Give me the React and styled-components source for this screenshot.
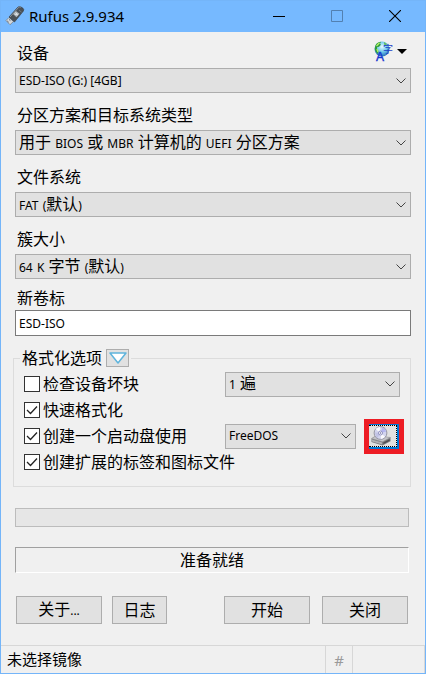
import React, { useId, useState } from "react";
import styled, { createGlobalStyle, css } from "styled-components";

const UI = `"Noto Sans", "Noto Sans CJK SC", sans-serif`;

const GlobalStyle = createGlobalStyle`
  * { box-sizing: border-box; }
  body {
    margin: 0;
    background: #f0f0f0;
    color: #000;
    font: 16px/22px ${UI};
  }
  button, select, input { font: inherit; color: inherit; margin: 0; }
`;

const Window = styled.div`
  display: flex;
  flex-direction: column;
  min-height: 100vh;
  border: 1px solid #74b5f9;
  background: #f0f0f0;
`;

const TitleBar = styled.header`
  display: flex;
  align-items: center;
  height: 31px;
  padding: 0 1px 2px 4px;
  background: #76b9ff;
`;

const Title = styled.h1`
  flex: 1;
  margin: 0 0 0 4px;
  font-size: 15px;
  font-weight: 400;
  line-height: 20px;
`;

const CaptionButton = styled.button`
  display: flex;
  align-items: center;
  justify-content: center;
  width: 58px;
  height: 29px;
  padding: 0;
  border: 0;
  background: transparent;
  &:disabled { opacity: 0.3; }
`;

const Content = styled.main`
  display: flex;
  flex: 1;
  flex-direction: column;
  padding: 10px 14px 20px;
`;

const FieldList = styled.div`
  display: grid;
  gap: 11px;
`;

const Field = styled.div`
  display: flex;
  flex-direction: column;
  gap: ${(p) => (p.$tight ? "1px" : "4px")};
  margin-top: ${(p) => (p.$tight ? "8px" : "0")};
`;

const FieldHead = styled.div`
  display: flex;
  justify-content: space-between;
  height: 22px;
  padding: 0 4px 0 2px;
`;

const LanguageButton = styled.button`
  display: flex;
  align-items: center;
  gap: 3px;
  height: 18px;
  padding: 0;
  border: 0;
  background: transparent;
`;

const ComboBox = styled.div`
  display: grid;
  grid-template-columns: minmax(0, 1fr) 20px;
  align-items: center;
  width: 100%;
`;

const NativeSelect = styled.select`
  grid-area: 1 / 1 / 2 / 3;
  width: 100%;
  height: 25px;
  padding: 0 20px 0 3px;
  border: 1px solid #adadad;
  border-radius: 0;
  background: #e1e1e1;
  font-size: 12px;
  appearance: none;
  ${(p) => p.$covered && css`color: transparent;`}
  option { color: #000; }
`;

const ComboText = styled.span`
  grid-area: 1 / 1;
  padding-left: 4px;
  overflow: hidden;
  white-space: nowrap;
  line-height: 22px;
  pointer-events: none;
`;

const Latin = styled.span`
  font-size: 12px;
`;

const Chevron = styled.svg`
  grid-area: 1 / 2;
  justify-self: center;
  pointer-events: none;
`;

const TextInput = styled.input`
  width: 100%;
  height: 26px;
  padding: 0 3px;
  border: 1px solid #7a7a7a;
  background: #fff;
  font-size: 12px;
`;

const Options = styled.fieldset`
  min-width: 0;
  margin: 12px 0 0 -2px;
  padding: 3px 9px 11px 10px;
  border: 1px solid #dcdcdc;
`;

const Legend = styled.legend`
  display: flex;
  align-items: center;
  gap: 4px;
  height: 20px;
  margin-left: -4px;
  padding: 0 2px;
`;

const ExpandButton = styled.button`
  display: flex;
  align-items: center;
  justify-content: center;
  width: 23px;
  height: 18px;
  padding: 0;
  border: 1px solid #adadad;
  background: #e1e1e1;
`;

const OptionRow = styled.div`
  display: flex;
  align-items: center;
  height: 26px;
`;

const CheckLabel = styled.label`
  display: flex;
  flex: 1;
  align-items: center;
  gap: 3px;
  white-space: nowrap;
`;

const CheckBox = styled.input`
  flex: none;
  width: 16px;
  height: 16px;
  margin: 0;
  border: 1px solid #333;
  background: #fff center / 14px 14px no-repeat;
  appearance: none;
  &:checked {
    background-image: url("data:image/svg+xml,%3Csvg xmlns='http://www.w3.org/2000/svg' viewBox='0 0 14 14'%3E%3Cpath d='M2 7l3.5 3.5L12 3.5' fill='none' stroke='%23222' stroke-width='1.3'/%3E%3C/svg%3E");
  }
`;

const OptionControls = styled.div`
  display: flex;
  flex: none;
  align-items: center;
  gap: 8px;
  width: 175px;
  margin-right: 1px;
`;

const BootControls = styled(OptionControls)`
  width: 179px;
  margin-right: -3px;
`;

const Highlight = styled.div`
  flex: none;
  width: 40px;
  height: 35px;
  padding: 5px;
  background: #ed1c24;
`;

const DiscButton = styled.button`
  display: flex;
  width: 30px;
  height: 25px;
  padding: 0;
  border: 0 solid #0078d7;
  border-width: 1px 2px 2px 0;
  background: #e1e1e1;
`;

const FocusArea = styled.span`
  display: flex;
  flex: 1;
  align-items: center;
  justify-content: center;
  height: 100%;
  padding-right: 3px;
  border: 1px dotted #000;
  border-left: 0;
`;

const Progress = styled.div`
  height: 19px;
  margin: 21px 2px 0 0;
  border: 1px solid #bcbcbc;
  background: #e6e6e6;
`;

const Status = styled.output`
  height: 26px;
  margin: 20px 2px 0 0;
  border: 1px solid;
  border-color: #a0a0a0 #fff #fff #a0a0a0;
  line-height: 24px;
  text-align: center;
`;

const Actions = styled.div`
  display: flex;
  gap: 10px;
  margin: 23px 3px 0 1px;
`;

const ActionButton = styled.button`
  width: ${(p) => (p.$small ? "55px" : "86px")};
  height: 28px;
  padding: 0;
  border: 1px solid #adadad;
  background: #e1e1e1;
`;

const EndActions = styled.div`
  display: flex;
  gap: 12px;
  margin-left: auto;
`;

const StatusBar = styled.footer`
  display: flex;
  height: 28px;
  border-top: 1px solid #d7d7d7;
  font-size: 15px;
  line-height: 26px;
`;

const StatusCell = styled.div`
  flex: ${(p) => (p.$width ? "none" : "1")};
  width: ${(p) => p.$width || "auto"};
  padding-left: 6px;
  border-right: 1px solid #d7d7d7;
`;

const HashButton = styled.button`
  flex: none;
  width: 27px;
  padding: 0;
  border: 0;
  border-right: 1px solid #d7d7d7;
  background: transparent;
  color: #9a9a9a;
`;

function UsbIcon() {
  return (
    <svg width="20" height="20" viewBox="0 0 20 20" aria-hidden="true">
      <path d="M1 14.5l3-3 4.5 4-3.5 3.2z" fill="#d5d9dd" stroke="#77818a" strokeWidth=".8" />
      <path d="M2.3 15l1.3 1.1M4 13.4l1.4 1.2" stroke="#59636b" strokeWidth="1" />
      <path d="M4 11L12.5 1.5Q14-.1 16 1l2 1.3q1.4 1.2.2 3L9.5 16z" fill="#4b5157" stroke="#343a40" strokeWidth=".6" />
      <path d="M5 11l8.5-9.5q1-1 2.3-.2" fill="none" stroke="#8a949c" />
      <path d="M8 8l3-3 3.5 2.8-3 3.4z" fill="#aeb5ba" />
      <path d="M9.6 8l3 1M10.5 6.6l2.3 2" stroke="#e3e6e8" />
      <path d="M14 4.2l2.6 2" stroke="#6f7880" />
    </svg>
  );
}

function LanguageIcon() {
  return (
    <svg width="20" height="21" viewBox="0 0 20 21" overflow="visible" aria-hidden="true">
      <defs>
        <radialGradient id="globe" cx=".5" cy=".35" r=".7">
          <stop offset="0" stopColor="#e6fbff" />
          <stop offset=".5" stopColor="#6cc6ea" />
          <stop offset="1" stopColor="#1a5cae" />
        </radialGradient>
      </defs>
      <circle cx="8" cy="8" r="7.5" fill="url(#globe)" />
      <path d="M1 6Q2 1 7 .8l-1 2 1 1-2 2-2 .5 0 2 1.5 2L4 13Q0 10 1 6z" fill="#2f9b3c" />
      <path d="M2.5 5l3-3.2M3 8l1 3" stroke="#b6ef68" strokeWidth="1.3" />
      <path d="M10 1l3 2-1 1.5-2-1z" fill="#65bd62" />
      <text x="9" y="12" fontFamily="Noto Sans CJK SC, sans-serif" fontSize="10" fill="#1b3fc5">字</text>
      <text x="2" y="20" fontFamily="Liberation Sans, sans-serif" fontSize="12" fill="#1637d0" stroke="#1637d0" strokeWidth=".4">A</text>
    </svg>
  );
}

function DiscIcon() {
  return (
    <svg width="20" height="20" viewBox="0 0 20 20" aria-hidden="true">
      <path d="M.5 12.5l5-3 14 2v3.8l-8 4.2-11-3.5z" fill="#77777b" />
      <path d="M.5 12.5l5-3 14 2-8 4.3z" fill="#c4c4c8" stroke="#929296" strokeWidth=".5" />
      <path d="M1 13.5l10.2 3v2L1 15.5z" fill="#b0b0b4" />
      <path d="M12.4 16.6l6.2-3.4v1.6l-6.2 3.3z" fill="#4d4d51" />
      <circle cx="9.5" cy="7" r="6.4" fill="#d3d5ee" stroke="#8f8f9c" strokeWidth=".9" />
      <path d="M9.5 7L4.5 3Q6.5 1.2 9 1.1z" fill="#fafaff" />
      <path d="M9.5 7l2-5.4Q14.5 2.7 15.2 5.4z" fill="#b4b6f0" />
      <path d="M9.5 7L4 6.4Q4 10 6.5 12z" fill="#c1c3e4" />
      <path d="M9.5 7l4.6 3.8Q12.4 12.9 10 12.9z" fill="#fafafd" />
      <circle cx="9.5" cy="7" r="2" fill="#fff" stroke="#7d7db2" strokeWidth=".8" />
      <circle cx="9.5" cy="7" r=".8" fill="#6b6ba0" />
    </svg>
  );
}

const Mixed = ({ text }) =>
  text.split(/([\x21-\x7e]+)/).map((part, i) =>
    /[\x21-\x7e]/.test(part) ? <Latin key={i}>{part}</Latin> : part
  );

function Combo({ id, value, label }) {
  const mixed = /[\u4e00-\u9fff]/.test(value);
  return (
    <ComboBox>
      <NativeSelect id={id} aria-label={label} $covered={mixed} defaultValue={value}>
        <option>{value}</option>
      </NativeSelect>
      {mixed && <ComboText aria-hidden="true"><Mixed text={value} /></ComboText>}
      <Chevron width="10" height="6" viewBox="0 0 10 6" aria-hidden="true">
        <path d="M.5.5L5 5 9.5.5" fill="none" stroke="#444" />
      </Chevron>
    </ComboBox>
  );
}

function SelectField({ label, value, children }) {
  const id = useId();
  return (
    <Field>
      <FieldHead>
        <label htmlFor={id}>{label}</label>
        {children}
      </FieldHead>
      <Combo id={id} value={value} />
    </Field>
  );
}

function Option({ label, checked, children }) {
  return (
    <OptionRow>
      <CheckLabel>
        <CheckBox type="checkbox" defaultChecked={checked} />
        {label}
      </CheckLabel>
      {children}
    </OptionRow>
  );
}

export default function App() {
  const [volume, setVolume] = useState("ESD-ISO");
  return (
    <Window>
      <GlobalStyle />
      <TitleBar>
        <UsbIcon />
        <Title>Rufus 2.9.934</Title>
        <CaptionButton aria-label="最小化">
          <svg width="12" height="12"><path d="M0 6.5h12" stroke="#000" /></svg>
        </CaptionButton>
        <CaptionButton aria-label="最大化" disabled>
          <svg width="12" height="12"><path d="M.5.5h11v11H.5z" fill="none" stroke="#000" /></svg>
        </CaptionButton>
        <CaptionButton aria-label="关闭窗口">
          <svg width="12" height="12"><path d="M0 0l12 12M12 0L0 12" stroke="#000" strokeWidth="1.1" /></svg>
        </CaptionButton>
      </TitleBar>
      <Content>
        <FieldList>
          <SelectField label="设备" value="ESD-ISO (G:) [4GB]">
            <LanguageButton aria-label="语言">
              <LanguageIcon />
              <svg width="10" height="5"><path d="M0 0h10L5 5z" /></svg>
            </LanguageButton>
          </SelectField>
          <SelectField label="分区方案和目标系统类型" value="用于 BIOS 或 MBR 计算机的 UEFI 分区方案" />
          <SelectField label="文件系统" value="FAT (默认)" />
          <SelectField label="簇大小" value="64 K 字节 (默认)" />
        </FieldList>
        <Field $tight>
          <FieldHead><label htmlFor="volume">新卷标</label></FieldHead>
          <TextInput id="volume" value={volume} onChange={(e) => setVolume(e.target.value)} />
        </Field>
        <Options>
          <Legend>
            格式化选项
            <ExpandButton type="button" aria-label="高级选项">
              <svg width="18" height="12" viewBox="0 0 18 12">
                <path d="M1 1h16L9 11z" fill="#fff" stroke="#5fb4dc" strokeWidth="1.5" strokeLinejoin="round" />
              </svg>
            </ExpandButton>
          </Legend>
          <Option label="检查设备坏块">
            <OptionControls><Combo label="检查遍数" value="1 遍" /></OptionControls>
          </Option>
          <Option label="快速格式化" checked />
          <Option label="创建一个启动盘使用" checked>
            <BootControls>
              <Combo label="启动类型" value="FreeDOS" />
              <Highlight>
                <DiscButton type="button" aria-label="选择镜像"><FocusArea><DiscIcon /></FocusArea></DiscButton>
              </Highlight>
            </BootControls>
          </Option>
          <Option label="创建扩展的标签和图标文件" checked />
        </Options>
        <Progress role="progressbar" aria-label="进度" aria-valuenow={0} />
        <Status>准备就绪</Status>
        <Actions>
          <ActionButton><Mixed text="关于..." /></ActionButton>
          <ActionButton $small>日志</ActionButton>
          <EndActions>
            <ActionButton>开始</ActionButton>
            <ActionButton>关闭</ActionButton>
          </EndActions>
        </Actions>
      </Content>
      <StatusBar>
        <StatusCell>未选择镜像</StatusCell>
        <HashButton aria-label="校验和">#</HashButton>
        <StatusCell $width="72px" />
      </StatusBar>
    </Window>
  );
}
